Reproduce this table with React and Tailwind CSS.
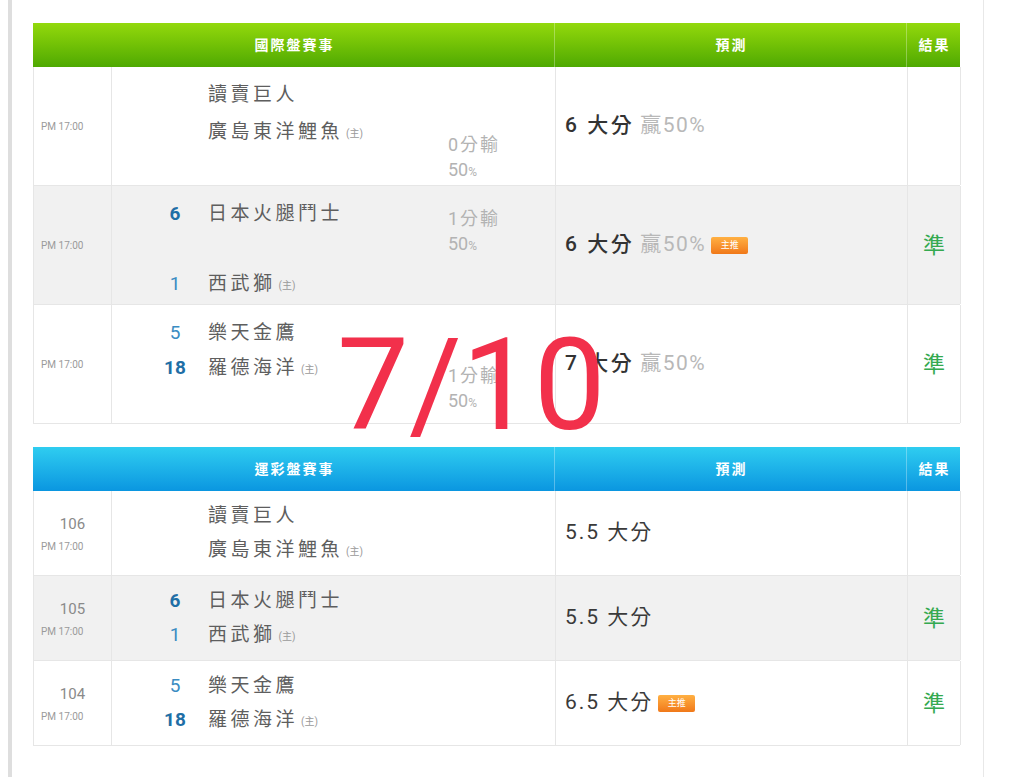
const font = { fontFamily: 'Roboto, "Noto Sans CJK TC", "Noto Sans CJK SC", sans-serif' };

const intl = [
    {
        time: 'PM 17:00',
        lines: [
            { h: 'h-[37px]', name: '讀賣巨人' },
            { h: 'h-[35px]', name: '廣島東洋鯉魚', home: true, hc: ['0分輸', '50'], hcMt: 'mt-[17px]' },
        ],
        pick: '6 大分',
        rate: '贏50%',
        result: '',
    },
    {
        time: 'PM 17:00',
        lines: [
            { h: 'h-[70px]', score: '6', win: true, name: '日本火腿鬥士', hc: ['1分輸', '50'], hcMt: 'mt-[9px]' },
            { h: 'h-[35px]', score: '1', name: '西武獅', home: true },
        ],
        pick: '6 大分',
        rate: '贏50%',
        badge: true,
        result: '準',
    },
    {
        time: 'PM 17:00',
        lines: [
            { h: 'h-[35px]', score: '5', name: '樂天金鷹' },
            { h: 'h-[35px]', score: '18', win: true, name: '羅德海洋', home: true, hc: ['1分輸', '50'], hcMt: 'mt-[12px]' },
        ],
        pick: '7 大分',
        rate: '贏50%',
        result: '準',
    },
];

const lottery = [
    { no: '106', lines: [{ name: '讀賣巨人' }, { name: '廣島東洋鯉魚', home: true }], pick: '5.5 大分', result: '' },
    { no: '105', lines: [{ score: '6', win: true, name: '日本火腿鬥士' }, { score: '1', name: '西武獅', home: true }], pick: '5.5 大分', result: '準' },
    { no: '104', lines: [{ score: '5', name: '樂天金鷹' }, { score: '18', win: true, name: '羅德海洋', home: true }], pick: '6.5 大分', badge: true, result: '準' },
];

const cols = 'grid grid-cols-[78px_444px_352px_53px]';
const cell = 'border-r border-[#e6e6e6]';

function Header({ title, gradient }) {
    return (
        <div className={`${cols} h-[44px] ${gradient} text-white text-[14px] font-bold tracking-[2px]`}>
            <div className="col-span-2 flex items-center justify-center border-r border-white/30 pl-[2px]">{title}</div>
            <div className="flex items-center justify-center border-r border-white/30 pl-[2px]">預測</div>
            <div className="flex items-center justify-center pl-[2px]">結果</div>
        </div>
    );
}

function Badge() {
    return (
        <span className="ml-[5px] inline-flex h-[17px] w-[37px] items-center justify-center rounded-[2px] bg-gradient-to-b from-[#ffb042] to-[#f07818] text-[9px] leading-none text-white">
            主推
        </span>
    );
}

function TeamLine({ line, h = 'h-[34px]' }) {
    return (
        <div className={`flex items-start ${h}`}>
            <div className="flex h-[34px] items-center">
                <span
                    className={`ml-[49px] w-[28px] text-center text-[19px] ${line.win ? 'font-bold text-[#1f6fa6]' : 'text-[#3a8cc2]'}`}
                >
                    {line.score}
                </span>
                <span className="ml-[19px] flex w-[240px] items-center text-[19px] tracking-[3.5px] text-[#5e5e5e]">
                    {line.name}
                    {line.home && <span className="ml-[3px] mt-[3px] text-[10px] tracking-normal text-[#9a9a9a]">(主)</span>}
                </span>
            </div>
            {line.hc && (
                <div className={`${line.hcMt} text-[18px] leading-[25px] text-[#b3b3b3]`}>
                    <div className="tracking-[2px]">{line.hc[0]}</div>
                    <div>
                        {line.hc[1]}
                        <span className="text-[12px]">%</span>
                    </div>
                </div>
            )}
        </div>
    );
}

export default function App() {
    return (
        <div className="relative min-h-[777px] w-full bg-white" style={font}>
            <div className="ml-[8px] min-h-[777px] w-[976px] border-l-4 border-r border-l-[#dedede] border-r-[#e8e8e8] pl-[21px] pt-[23px]">
                <div className="w-[927px]">
                    <Header title="國際盤賽事" gradient="bg-gradient-to-b from-[#93d90c] to-[#4ea902]" />
                    {intl.map((row, i) => (
                        <div key={i} className={`${cols} h-[119px] border-b border-l border-[#e6e6e6] ${i % 2 ? 'bg-[#f1f1f1]' : 'bg-white'}`}>
                            <div className={`${cell} flex items-center pl-[7px] text-[10px] text-[#9a9a9a]`}>{row.time}</div>
                            <div className={`${cell} pt-[11px]`}>
                                {row.lines.map((line, j) => (
                                    <TeamLine key={j} line={line} h={line.h} />
                                ))}
                            </div>
                            <div className={`${cell} flex items-center pl-[9px]`}>
                                <span className="text-[21px] font-medium tracking-[2.5px] text-[#333]">{row.pick}</span>
                                <span className="ml-[6px] text-[21px] tracking-[1.5px] text-[#b8b8b8]">{row.rate}</span>
                                {row.badge && <Badge />}
                            </div>
                            <div className={`${cell} flex items-center justify-center text-[22px] text-[#34a94f]`}>{row.result}</div>
                        </div>
                    ))}

                    <div className="mt-[23px]">
                        <Header title="運彩盤賽事" gradient="bg-gradient-to-b from-[#2fcdf0] to-[#0a96e0]" />
                        {lottery.map((row, i) => (
                            <div key={i} className={`${cols} h-[85px] border-b border-l border-[#e6e6e6] ${i % 2 ? 'bg-[#f1f1f1]' : 'bg-white'}`}>
                                <div className={`${cell} flex flex-col justify-center`}>
                                    <span className="text-center text-[15px] leading-[22px] text-[#8a8a8a]">{row.no}</span>
                                    <span className="mt-[4px] pl-[7px] text-[10px] text-[#9a9a9a]">PM 17:00</span>
                                </div>
                                <div className={`${cell} flex flex-col justify-center`}>
                                    {row.lines.map((line, j) => (
                                        <TeamLine key={j} line={line} />
                                    ))}
                                </div>
                                <div className={`${cell} flex items-center pl-[9px]`}>
                                    <span className="text-[21px] tracking-[2px] text-[#3a3a3a]">{row.pick}</span>
                                    {row.badge && <Badge />}
                                </div>
                                <div className={`${cell} flex items-center justify-center text-[22px] text-[#34a94f]`}>{row.result}</div>
                            </div>
                        ))}
                    </div>
                </div>
            </div>

            <div className="pointer-events-none absolute left-[337px] top-[321px] text-[128px] leading-none text-[#f2304b]">7/10</div>
        </div>
    );
}
